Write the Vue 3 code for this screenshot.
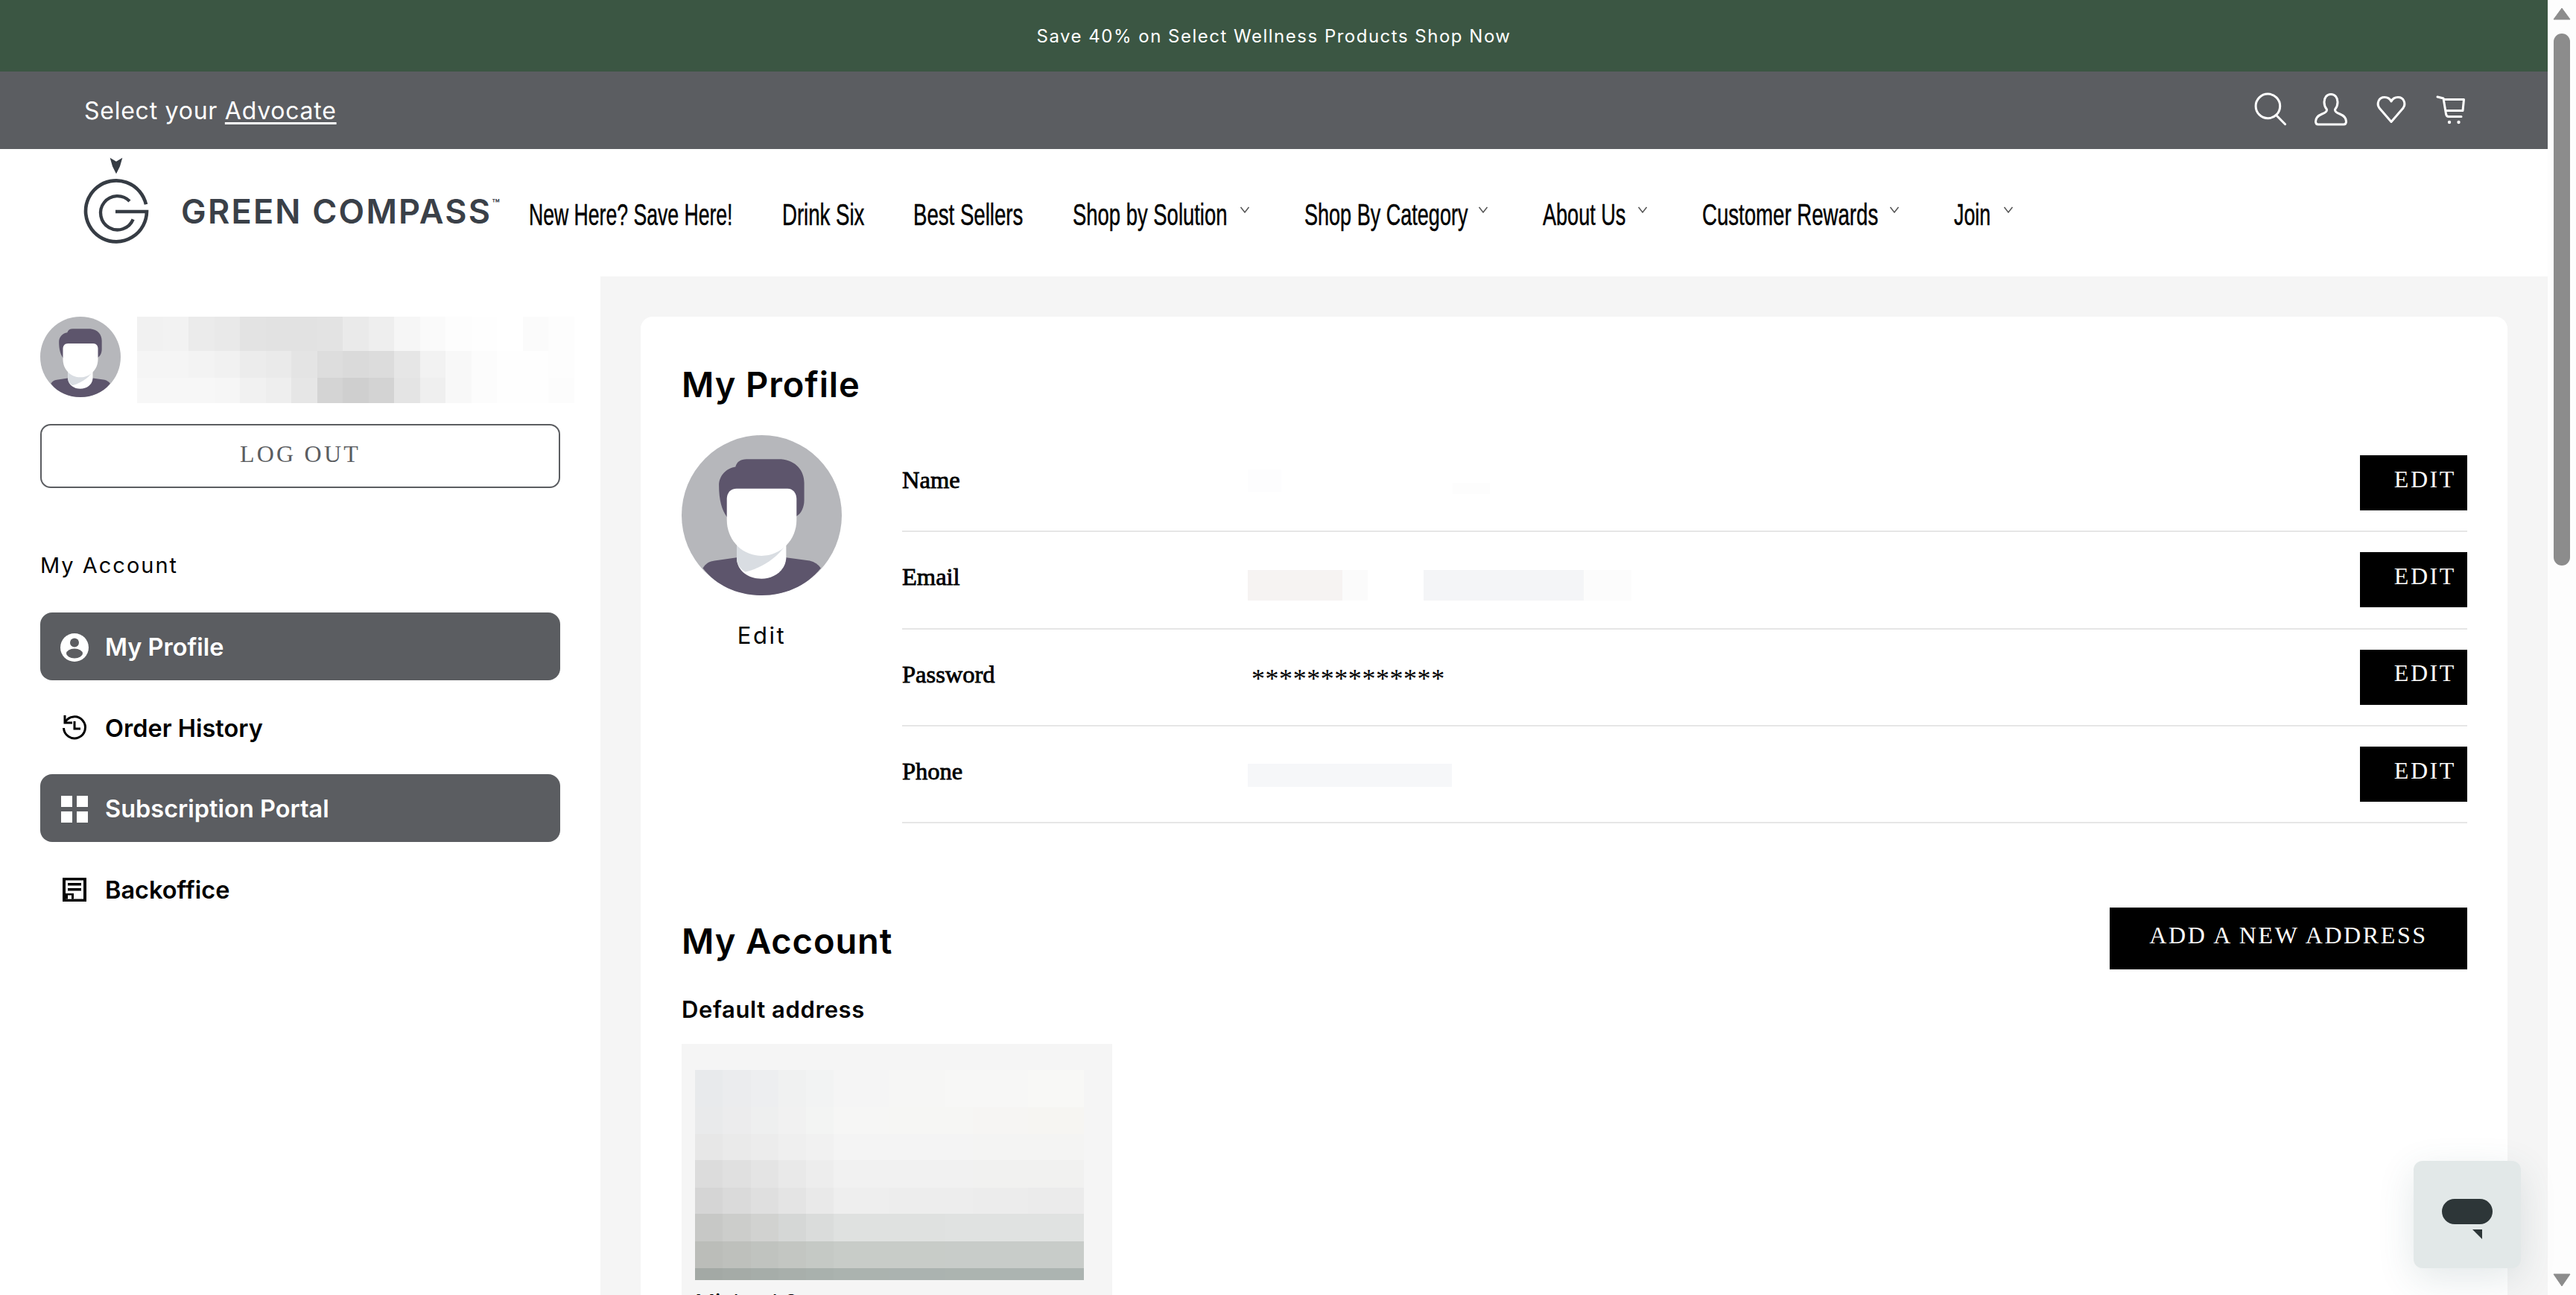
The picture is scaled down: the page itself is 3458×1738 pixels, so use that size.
<template>
  <div class="app">
    <svg class="defs" width="0" height="0">
      <symbol id="avatar" viewBox="27 27 648 648">
        <circle cx="351" cy="351" r="324" fill="#b6b7bb" />
        <path d="M113 565C125 545 140 538 160 535L250 522H450L545 535C565 540 580 550 590 565C530 640 440 675 351 675C260 675 170 640 113 565Z" fill="#5d556c" />
        <path d="M250 460V530C255 580 300 608 350 608C400 608 447 575 450 525V470Z" fill="#fff" />
        <path d="M250 460V530C252 550 265 570 285 580C350 565 410 525 445 475Z" fill="#d9dde2" />
        <path d="M210 358C190 330 178 290 178 230C178 190 210 160 245 155C250 135 265 124 290 124H430C490 130 523 170 523 220V290C523 320 510 345 492 355Z" fill="#5d556c" />
        <path d="M210 285C210 260 225 243 250 243H455C478 243 492 262 492 285V370C492 450 430 515 350 515C270 515 210 450 210 370Z" fill="#fff" />
      </symbol>
    </svg>

    <div class="page">
      <div class="promo">Save 40% on Select Wellness Products Shop Now</div>

      <div class="topbar">
        <div class="advocate">Select your <a>Advocate</a></div>
        <div class="top-icons">
          <svg viewBox="0 0 48 48" class="ticon">
            <circle cx="20.4" cy="19.4" r="16.3" />
            <path d="M32 32L43.6 43.7" />
          </svg>
          <svg viewBox="0 0 48 48" class="ticon">
            <path d="M24 3.5C18.5 3.5 15 8 15 14C15 18 16.5 21.5 18.5 24C19 27 16 28.5 12 30C7 32 3.5 35 3.5 40C3.5 43 5 44 7 44H41C43 44 44.5 43 44.5 40C44.5 35 41 32 36 30C32 28.5 29 27 29.5 24C31.5 21.5 33 18 33 14C33 8 29.5 3.5 24 3.5Z" />
          </svg>
          <svg viewBox="0 0 48 48" class="ticon">
            <path d="M24 40.5L8 22C4 16 7 7.5 15 7.5C19 7.5 22.5 10 24 13C25.5 10 29 7.5 33 7.5C41 7.5 44 16 40 22Z" />
          </svg>
          <svg viewBox="0 0 48 48" class="ticon">
            <path d="M5 7L13 9L16.5 30C16.8 32 18 33.5 20 33.5H37" />
            <path d="M14 10.5H40.5L39 25.5H17" />
            <circle class="wheel" cx="21" cy="41" r="2.2" />
            <circle class="wheel" cx="33.5" cy="41" r="2.2" />
          </svg>
        </div>
      </div>

      <header class="header">
        <div class="logo">
          <svg viewBox="0 0 360 390" class="logo-mark">
            <path d="M143 20L168 35L193 20L183 55L168 85L153 55Z" fill="#363c44" />
            <path d="M288 208A123 123 0 1 0 291 237H165" fill="none" stroke="#363c44" stroke-width="14" />
            <path d="M222 195A68 68 0 1 0 236 268" fill="none" stroke="#363c44" stroke-width="13" />
          </svg>
          <span class="logo-name">GREEN COMPASS<sup>™</sup></span>
        </div>
        <nav class="nav">
          <div v-for="item in NAV" :key="item.label" class="nav-item" :class="{ drop: item.drop }">
            <span class="nav-box" :style="{ width: item.w + 'px' }">
              <span class="nav-label" :style="{ transform: 'scaleX(' + item.sx + ')' }">{{ item.label }}</span>
            </span>
            <svg v-if="item.drop" class="chev" viewBox="0 0 14 9"><path d="M1.5 1L7 8L12.5 1" /></svg>
          </div>
        </nav>
      </header>

      <div class="content">
        <aside class="sidebar">
          <div class="who">
            <svg class="avatar-sm"><use href="#avatar" /></svg>
            <div class="name-blur">
              <template v-for="(row, r) in NAME_MOSAIC" :key="r">
                <i v-for="(c, k) in row" :key="k" :style="{ background: grey(c) }" />
              </template>
            </div>
          </div>
          <button class="logout">LOG OUT</button>
          <div class="side-title">My Account</div>
          <div class="side-menu">
            <a class="side-item on">
              <svg viewBox="0 0 38 38" class="side-icon">
                <circle cx="19" cy="19" r="19" fill="#fff" />
                <circle cx="19" cy="12.5" r="6" fill="#5c5d61" />
                <ellipse cx="19" cy="27" rx="11" ry="6.5" fill="#5c5d61" />
              </svg>
              My Profile
            </a>
            <a class="side-item">
              <svg viewBox="0 0 38 38" class="side-icon">
                <path d="M6 2V12H16" fill="none" stroke="#000" stroke-width="3" />
                <path d="M6.5 11A14.5 14.5 0 1 1 4.5 19" fill="none" stroke="#000" stroke-width="3" />
                <path d="M19 10V20H27" fill="none" stroke="#000" stroke-width="3" />
              </svg>
              Order History
            </a>
            <a class="side-item on">
              <svg viewBox="0 0 38 38" class="side-icon">
                <rect x="1" y="1" width="15" height="15" fill="#fff" />
                <rect x="22" y="1" width="15" height="15" fill="#fff" />
                <rect x="1" y="22" width="15" height="15" fill="#fff" />
                <rect x="22" y="22" width="15" height="15" fill="#fff" />
              </svg>
              Subscription Portal
            </a>
            <a class="side-item">
              <svg viewBox="0 0 38 38" class="side-icon">
                <rect x="3" y="3" width="32" height="32" fill="#000" />
                <rect x="7" y="6.5" width="24" height="25" fill="#fff" />
                <rect x="10" y="10" width="18" height="3.5" fill="#000" />
                <rect x="10" y="17" width="18" height="3.5" fill="#000" />
                <path d="M7 31.5V24H18V31.5Z" fill="#000" />
                <rect x="10" y="26.5" width="5" height="5" fill="#fff" />
              </svg>
              Backoffice
            </a>
          </div>
        </aside>

        <main class="main">
          <section class="card">
            <h1 class="title">My Profile</h1>
            <div class="profile">
              <div class="photo">
                <svg class="avatar-lg"><use href="#avatar" /></svg>
                <span class="photo-edit">Edit</span>
              </div>
              <div class="rows">
                <div class="row">
                  <div class="label">Name</div>
                  <div class="value">
                    <i class="blur b-name1" />
                    <i class="blur b-name2" />
                  </div>
                  <button class="edit">EDIT</button>
                </div>
                <div class="row">
                  <div class="label">Email</div>
                  <div class="value">
                    <i class="blur b-email1" />
                    <i class="blur b-email2" />
                    <i class="blur b-email3" />
                    <i class="blur b-email4" />
                  </div>
                  <button class="edit">EDIT</button>
                </div>
                <div class="row">
                  <div class="label">Password</div>
                  <div class="value stars">**************</div>
                  <button class="edit">EDIT</button>
                </div>
                <div class="row">
                  <div class="label">Phone</div>
                  <div class="value"><i class="blur b-phone" /></div>
                  <button class="edit">EDIT</button>
                </div>
              </div>
            </div>

            <div class="account-head">
              <h2 class="title">My Account</h2>
              <button class="add">ADD A NEW ADDRESS</button>
            </div>
            <div class="default">Default address</div>
            <div class="address">
              <div class="addr-blur">
                <div v-for="(row, r) in ADDRESS_ROWS" :key="r" class="addr-row" :style="{ height: row.h + 'px' }">
                  <i v-for="n in 14" :key="n" :style="{ background: addrColor(row, n - 1) }" />
                </div>
              </div>
              <div class="addr-name">Michael S</div>
            </div>
          </section>
        </main>
      </div>
    </div>

    <div class="scrollbar">
      <svg class="arrow up" viewBox="0 0 24 18"><path d="M12 1L23 16H1Z" /></svg>
      <div class="thumb" />
      <svg class="arrow down" viewBox="0 0 24 18"><path d="M1 1H23L12 17Z" /></svg>
    </div>

    <div class="chat">
      <svg viewBox="0 0 68 54" class="chat-icon">
        <rect x="0" y="0" width="68" height="34" rx="17" />
        <path d="M41 41H54V54Z" />
      </svg>
    </div>
  </div>
</template>

<script setup>
const NAV = [
  { label: 'New Here? Save Here!', w: 274, sx: 0.665 },
  { label: 'Drink Six', w: 110, sx: 0.69 },
  { label: 'Best Sellers', w: 148, sx: 0.69 },
  { label: 'Shop by Solution', w: 207, sx: 0.686, drop: true },
  { label: 'Shop By Category', w: 216, sx: 0.676, drop: true },
  { label: 'About Us', w: 110, sx: 0.677, drop: true },
  { label: 'Customer Rewards', w: 234, sx: 0.69, drop: true },
  { label: 'Join', w: 49, sx: 0.67, drop: true },
]

const NAME_MOSAIC = [
  [0xf1, 0xf2, 0xeb, 0xe9, 0xe3, 0xe2, 0xe2, 0xe3, 0xea, 0xee, 0xf6, 0xfa, 0xfd, 0xfe, 0xff, 0xfb, 0xfd],
  [0xf5, 0xf5, 0xf3, 0xf1, 0xec, 0xea, 0xe4, 0xdd, 0xda, 0xdc, 0xe6, 0xf2, 0xf8, 0xfc, 0xfe, 0xfe, 0xfd],
  [0xf7, 0xf7, 0xf7, 0xf6, 0xf1, 0xee, 0xe6, 0xd4, 0xcf, 0xd3, 0xe4, 0xef, 0xf8, 0xfc, 0xfe, 0xfe, 0xfc],
]

const ADDRESS_ROWS = [
  { h: 50.5, l: [232, 234, 236], m: [245, 245, 245], r: [248, 248, 246] },
  { h: 35.5, l: [233, 234, 235], m: [246, 246, 245], r: [246, 245, 242] },
  { h: 35.5, l: [231, 231, 231], m: [244, 244, 244], r: [244, 244, 243] },
  { h: 36.5, l: [220, 220, 220], m: [241, 241, 241], r: [241, 241, 240] },
  { h: 35.5, l: [213, 213, 213], m: [238, 238, 238], r: [235, 235, 235] },
  { h: 37, l: [199, 200, 198], m: [223, 225, 224], r: [224, 226, 225] },
  { h: 36, l: [187, 189, 185], m: [200, 204, 200], r: [200, 204, 201] },
  { h: 16, l: [163, 169, 165], m: [171, 179, 175], r: [172, 180, 177] },
]

function grey(v) {
  return 'rgb(' + v + ',' + v + ',' + v + ')'
}

// darker on the left, flattens out from the middle of the block
function addrColor(row, col) {
  const c = []
  for (let i = 0; i < 3; i++) {
    if (col < 5) c.push(Math.round(row.l[i] + (row.m[i] - row.l[i]) * (col / 5)))
    else c.push(Math.round(row.m[i] + (row.r[i] - row.m[i]) * ((col - 5) / 8)))
  }
  return 'rgb(' + c.join(',') + ')'
}
</script>

<style>
html, body {
  margin: 0;
  overflow: hidden;
  background: #fff;
}
</style>

<style scoped>
.app {
  position: relative;
  display: flex;
  width: 3458px;
  height: 1738px;
  overflow: hidden;
  font-family: Inter, "Liberation Sans", sans-serif;
  color: #000;
}
.defs {
  position: absolute;
}
.page {
  width: 3420px;
  display: flex;
  flex-direction: column;
}

.promo {
  height: 96px;
  flex-shrink: 0;
  background: #3b5643;
  color: #fff;
  font-size: 24px;
  letter-spacing: 1.5px;
  display: flex;
  align-items: center;
  justify-content: center;
}

.topbar {
  height: 104px;
  flex-shrink: 0;
  background: #5b5d61;
  color: #fff;
  display: flex;
  align-items: center;
  justify-content: space-between;
  padding-left: 113px;
  padding-right: 105px;
}
.advocate {
  font-size: 32px;
  letter-spacing: 0.75px;
}
.advocate a {
  text-decoration: underline;
  text-decoration-thickness: 3px;
  text-underline-offset: 4px;
}
.top-icons {
  display: flex;
  gap: 33px;
  margin-top: -2px;
}
.ticon {
  width: 48px;
  height: 48px;
  fill: none;
  stroke: #fff;
  stroke-width: 3;
  stroke-linecap: round;
  stroke-linejoin: round;
}
.ticon .wheel {
  fill: #fff;
  stroke: none;
}

.header {
  height: 171px;
  flex-shrink: 0;
  background: #fff;
  display: flex;
  align-items: center;
}
.logo {
  display: flex;
  width: 710px;
  box-sizing: border-box;
  padding-left: 100px;
  height: 171px;
  position: relative;
}
.logo-mark {
  width: 120px;
  height: 130px;
  margin-top: 5px;
  flex-shrink: 0;
}
.logo-name {
  margin-left: 23px;
  margin-top: 57px;
  font-size: 45px;
  line-height: 54px;
  font-weight: 600;
  letter-spacing: 2.2px;
  color: #3a4048;
  white-space: nowrap;
}
.logo-name sup {
  font-size: 17px;
  letter-spacing: 0;
  vertical-align: 20px;
  line-height: 0;
}
.nav {
  display: flex;
  align-items: center;
  gap: 66px;
  padding-top: 4px;
}
.nav-item {
  display: flex;
  align-items: flex-start;
}
.nav-item.drop {
  padding-right: 7px;
}
.nav-box {
  display: block;
  height: 48px;
}
.nav-label {
  display: inline-block;
  font-family: "Liberation Sans", sans-serif;
  font-size: 40px;
  line-height: 48px;
  white-space: nowrap;
  -webkit-text-stroke: 0.5px #000;
  transform-origin: left center;
}
.chev {
  width: 14px;
  height: 9px;
  margin-left: 17px;
  margin-top: 13px;
  fill: none;
  stroke: #555;
  stroke-width: 1.5;
}

.content {
  flex: 1;
  display: flex;
  min-height: 0;
}
.sidebar {
  width: 806px;
  flex-shrink: 0;
  box-sizing: border-box;
  padding: 54px 54px 0;
  background: #fff;
}
.who {
  display: flex;
  gap: 22px;
  height: 116px;
}
.avatar-sm {
  width: 108px;
  height: 108px;
  flex-shrink: 0;
}
.name-blur {
  width: 587px;
  height: 116px;
  flex-shrink: 0;
  display: grid;
  grid-template-columns: repeat(17, 1fr);
  grid-template-rows: 46px 36px 34px;
}
.logout {
  display: block;
  width: 698px;
  height: 86px;
  margin-top: 28px;
  padding: 0 0 6px;
  background: #fff;
  border: 2px solid #5b5d61;
  border-radius: 14px;
  color: #5b5d61;
  font-family: "Liberation Serif", serif;
  font-size: 32px;
  letter-spacing: 3.2px;
}
.side-title {
  margin-top: 86px;
  font-size: 29px;
  line-height: 36px;
  letter-spacing: 2px;
}
.side-menu {
  margin-top: 45px;
  display: flex;
  flex-direction: column;
  gap: 17.5px;
}
.side-item {
  height: 91px;
  box-sizing: border-box;
  padding-left: 27px;
  padding-top: 2px;
  border-radius: 16px;
  display: flex;
  align-items: center;
  gap: 22px;
  font-size: 32.5px;
  font-weight: 600;
}
.side-item.on {
  background: #5b5d61;
  color: #fff;
}
.side-icon {
  width: 38px;
  height: 38px;
  flex-shrink: 0;
}

.main {
  flex: 1;
  min-width: 0;
  box-sizing: border-box;
  padding: 54px 54px 0;
  background: #f5f5f5;
}
.card {
  background: #fff;
  border-radius: 16px 16px 0 0;
  height: 1400px;
  box-sizing: border-box;
  padding: 63px 54px 0 55px;
}
.title {
  margin: 0;
  font-size: 47px;
  line-height: 56px;
  font-weight: 600;
  letter-spacing: 0.9px;
}
.profile {
  display: flex;
  gap: 81px;
  margin-top: 40px;
}
.photo {
  width: 215px;
  flex-shrink: 0;
  display: flex;
  flex-direction: column;
  align-items: center;
}
.avatar-lg {
  width: 215px;
  height: 215px;
}
.photo-edit {
  margin-top: 35px;
  font-size: 31px;
  line-height: 38px;
  letter-spacing: 2.5px;
}
.rows {
  flex: 1;
  min-width: 0;
}
.row {
  height: 130.33px;
  box-sizing: border-box;
  border-bottom: 2px solid #e6e6e6;
  display: flex;
  align-items: center;
}
.label {
  width: 464px;
  flex-shrink: 0;
  font-family: "Liberation Serif", serif;
  font-size: 32.5px;
  -webkit-text-stroke: 0.8px #000;
  padding-bottom: 7px;
}
.value {
  flex: 1;
  display: flex;
  position: relative;
  height: 60px;
  align-items: flex-start;
}
.blur {
  display: block;
  flex-shrink: 0;
}
.b-name1 { width: 45px; height: 30px; margin-top: 12px; background: #fdfdfe; }
.b-name2 { width: 50px; height: 15px; margin-top: 30px; margin-left: 230px; background: #fdfdfd; }
.b-email1 { width: 127px; height: 41px; margin-top: 17px; background: #f6f3f2; }
.b-email2 { width: 34px; height: 41px; margin-top: 17px; background: #fbfbfb; }
.b-email3 { width: 215px; height: 41px; margin-top: 17px; margin-left: 75px; background: #f4f5f7; }
.b-email4 { width: 64px; height: 41px; margin-top: 17px; background: #fcfcfc; }
.b-phone { width: 274px; height: 31px; margin-top: 16px; background: #f6f7f9; }
.stars {
  align-items: center;
  padding-left: 5px;
  padding-top: 4px;
  box-sizing: border-box;
  font-family: "Liberation Serif", serif;
  font-size: 36px;
  letter-spacing: 0.55px;
}
.edit {
  width: 144px;
  height: 74px;
  flex-shrink: 0;
  padding: 0 15px 10px 0;
  border: 0;
  background: #000;
  color: #fff;
  text-align: right;
  font-family: "Liberation Serif", serif;
  font-size: 32px;
  letter-spacing: 2.6px;
}

.account-head {
  display: flex;
  align-items: center;
  justify-content: space-between;
  margin-top: 113px;
}
.account-head .title {
  padding-top: 7px;
}
.add {
  width: 480px;
  height: 83px;
  padding: 0 0 8px;
  border: 0;
  background: #000;
  color: #fff;
  font-family: "Liberation Serif", serif;
  font-size: 32px;
  letter-spacing: 2.6px;
}
.default {
  margin-top: 34px;
  font-size: 31px;
  line-height: 40px;
  font-weight: 600;
  letter-spacing: 0.6px;
}
.address {
  width: 578px;
  margin-top: 26px;
  padding: 34.5px 38px 0 18px;
  box-sizing: border-box;
  background: #f5f5f5;
  height: 400px;
}
.addr-blur {
  width: 522px;
}
.addr-row {
  display: grid;
  grid-template-columns: repeat(14, 1fr);
}
.addr-name {
  margin-top: 12px;
  font-size: 30px;
  line-height: 36px;
}

.scrollbar {
  width: 38px;
  display: flex;
  flex-direction: column;
  align-items: center;
  background: #fdfdfd;
}
.arrow {
  width: 24px;
  height: 18px;
  fill: #8c8c8c;
  stroke: #8c8c8c;
  stroke-width: 1;
  stroke-linejoin: round;
  flex-shrink: 0;
}
.arrow.up {
  margin-top: 10px;
}
.thumb {
  width: 22px;
  height: 714px;
  margin-top: 17px;
  border-radius: 11px;
  background: #8c8c8c;
}
.arrow.down {
  margin-top: auto;
  margin-bottom: 11px;
}

.chat {
  position: absolute;
  left: 3240px;
  top: 1558px;
  width: 144px;
  height: 144px;
  border-radius: 12px;
  background: #e2e8e8;
  box-shadow: 0 14px 50px rgba(60, 90, 100, 0.14);
  display: flex;
  justify-content: center;
}
.chat-icon {
  width: 68px;
  height: 54px;
  margin-top: 51px;
  fill: #2d3638;
}
</style>
